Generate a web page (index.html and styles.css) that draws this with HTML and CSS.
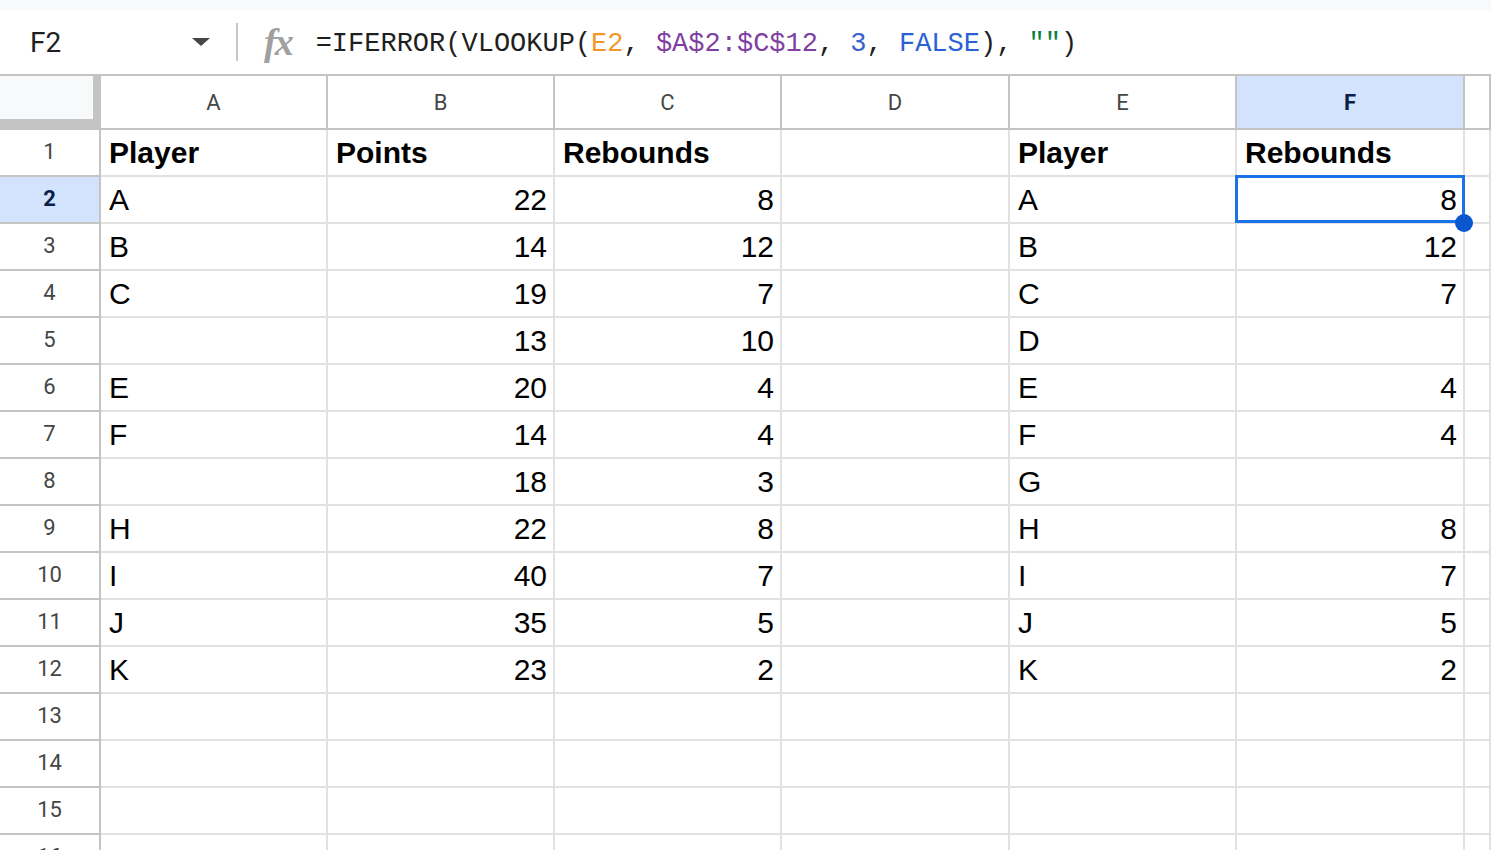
FILE: index.html
```html
<!DOCTYPE html>
<html lang="en">
<head>
    <meta charset="UTF-8">
    <meta name="viewport" content="width=device-width, initial-scale=1.0">
    <title>VLOOKUP with IFERROR</title>
    <link rel="stylesheet" href="styles.css">
</head>
<body>

<div class="top-strip"></div>
<div class="formula-bar">
    <div class="name-box">
        <span class="cell-ref">F2</span>
        <span class="dropdown"></span>
    </div>
    <div class="divider"></div>
    <span class="fx">fx</span>
    <div class="formula">=IFERROR(VLOOKUP(<span class="ref-orange">E2</span>, <span class="ref-purple">$A$2:$C$12</span>, <span class="num-blue">3</span>, <span class="bool-blue">FALSE</span>), <span class="str-green">""</span>)</div>
</div>

<div class="sheet" id="sheet">
    <!-- cells are built by the script below -->
</div>

<script>
    const columns = ['A', 'B', 'C', 'D', 'E', 'F', ''];
    const selectedCol = 5;   // F
    const selectedRow = 2;

    // [Player, Points, Rebounds, (D), Player, Rebounds]
    const data = [
        ['Player', 'Points', 'Rebounds', '', 'Player', 'Rebounds'],
        ['A', 22, 8, '', 'A', 8],
        ['B', 14, 12, '', 'B', 12],
        ['C', 19, 7, '', 'C', 7],
        ['', 13, 10, '', 'D', ''],
        ['E', 20, 4, '', 'E', 4],
        ['F', 14, 4, '', 'F', 4],
        ['', 18, 3, '', 'G', ''],
        ['H', 22, 8, '', 'H', 8],
        ['I', 40, 7, '', 'I', 7],
        ['J', 35, 5, '', 'J', 5],
        ['K', 23, 2, '', 'K', 2]
    ];
    const totalRows = 16;

    function makeCell(className, text) {
        const cell = document.createElement('div');
        cell.className = className;
        cell.textContent = text;
        return cell;
    }

    function buildSheet() {
        const sheet = document.getElementById('sheet');

        sheet.appendChild(makeCell('corner', ''));
        columns.forEach((letter, i) => {
            const cls = i === selectedCol ? 'col-head active' : 'col-head';
            sheet.appendChild(makeCell(cls, letter));
        });

        for (let r = 1; r <= totalRows; r++) {
            const rowCls = r === selectedRow ? 'row-head active' : 'row-head';
            sheet.appendChild(makeCell(rowCls, r));

            const values = data[r - 1] || [];
            for (let c = 0; c < columns.length; c++) {
                const value = values[c] !== undefined ? values[c] : '';
                let cls = 'cell';
                if (typeof value === 'number') cls += ' num';
                if (r === 1) cls += ' bold';
                if (r === selectedRow && c === selectedCol) cls += ' selected';
                sheet.appendChild(makeCell(cls, value));
            }
        }
    }

    buildSheet();
</script>

</body>
</html>
```

FILE: styles.css
```css
body {
    margin: 0;
    width: 1491px;
    height: 850px;
    overflow: hidden;
    background-color: white;
    font-family: "Liberation Sans", Arial, sans-serif;
}
.top-strip {
    height: 10px;
    background-color: #f8f9fa;
}
.formula-bar {
    display: flex;
    align-items: center;
    height: 64px;
    border-bottom: 2px solid #c4c4c4;
    background-color: white;
}
.name-box {
    display: flex;
    align-items: center;
    width: 212px;
    padding-left: 30px;
    box-sizing: border-box;
}
.cell-ref {
    font-family: Roboto, sans-serif;
    font-size: 28px;
    color: #1f1f1f;
    flex: 1;
}
.dropdown {
    width: 0;
    height: 0;
    border-left: 9px solid transparent;
    border-right: 9px solid transparent;
    border-top: 8px solid #444746;
    margin-right: 2px;
}
.divider {
    width: 2px;
    height: 38px;
    margin-left: 24px;
    background-color: #c7c7c7;
}
.fx {
    margin-left: 26px;
    font-family: "Liberation Serif", serif;
    font-style: italic;
    font-weight: bold;
    font-size: 38px;
    color: #a0a0a0;
    letter-spacing: -2px;
}
.formula {
    margin-left: 24px;
    padding-top: 4px;
    font-family: "Liberation Mono", monospace;
    font-size: 27px;
    color: #1f1f1f;
    white-space: pre;
}
.ref-orange { color: #f5962a; }
.ref-purple { color: #7f3fa3; }
.num-blue { color: #3a62d0; }
.bool-blue { color: #2a5fd6; }
.str-green { color: #0b8043; }

.sheet {
    display: grid;
    grid-template-columns: 101px 227px 227px 227px 228px 227px 228px 26px;
    grid-template-rows: 54px;
    grid-auto-rows: 47px;
}
.corner {
    background-color: #f8f9fa;
    border-right: 8px solid #c4c4c4;
    border-bottom: 11px solid #c4c4c4;
    box-sizing: border-box;
}
.col-head,
.row-head {
    display: flex;
    align-items: center;
    justify-content: center;
    font-family: Roboto, sans-serif;
    font-size: 22px;
    color: #444746;
    box-sizing: border-box;
    border-right: 2px solid #c4c4c4;
    border-bottom: 2px solid #c4c4c4;
    background-color: white;
}
.row-head {
    padding-bottom: 2px;
}
.col-head.active,
.row-head.active {
    background-color: #d3e3fd;
    color: #0b1e4a;
    font-weight: bold;
}
.cell {
    position: relative;
    box-sizing: border-box;
    border-right: 2px solid #e1e1e1;
    border-bottom: 2px solid #e1e1e1;
    padding: 0 6px 0 8px;
    font-size: 30px;
    line-height: 45px;
    color: #000;
    white-space: nowrap;
    overflow: hidden;
}
.cell.num {
    text-align: right;
}
.cell.bold {
    font-weight: bold;
}
.cell.selected {
    overflow: visible;
}
.cell.selected::before {
    content: "";
    position: absolute;
    top: -2px;
    left: -2px;
    right: -2px;
    bottom: -1px;
    border: 3px solid #1a73e8;
}
.cell.selected::after {
    content: "";
    position: absolute;
    right: -10px;
    bottom: -10px;
    width: 18px;
    height: 18px;
    border-radius: 50%;
    background-color: #0b57d0;
    z-index: 2;
}
```
